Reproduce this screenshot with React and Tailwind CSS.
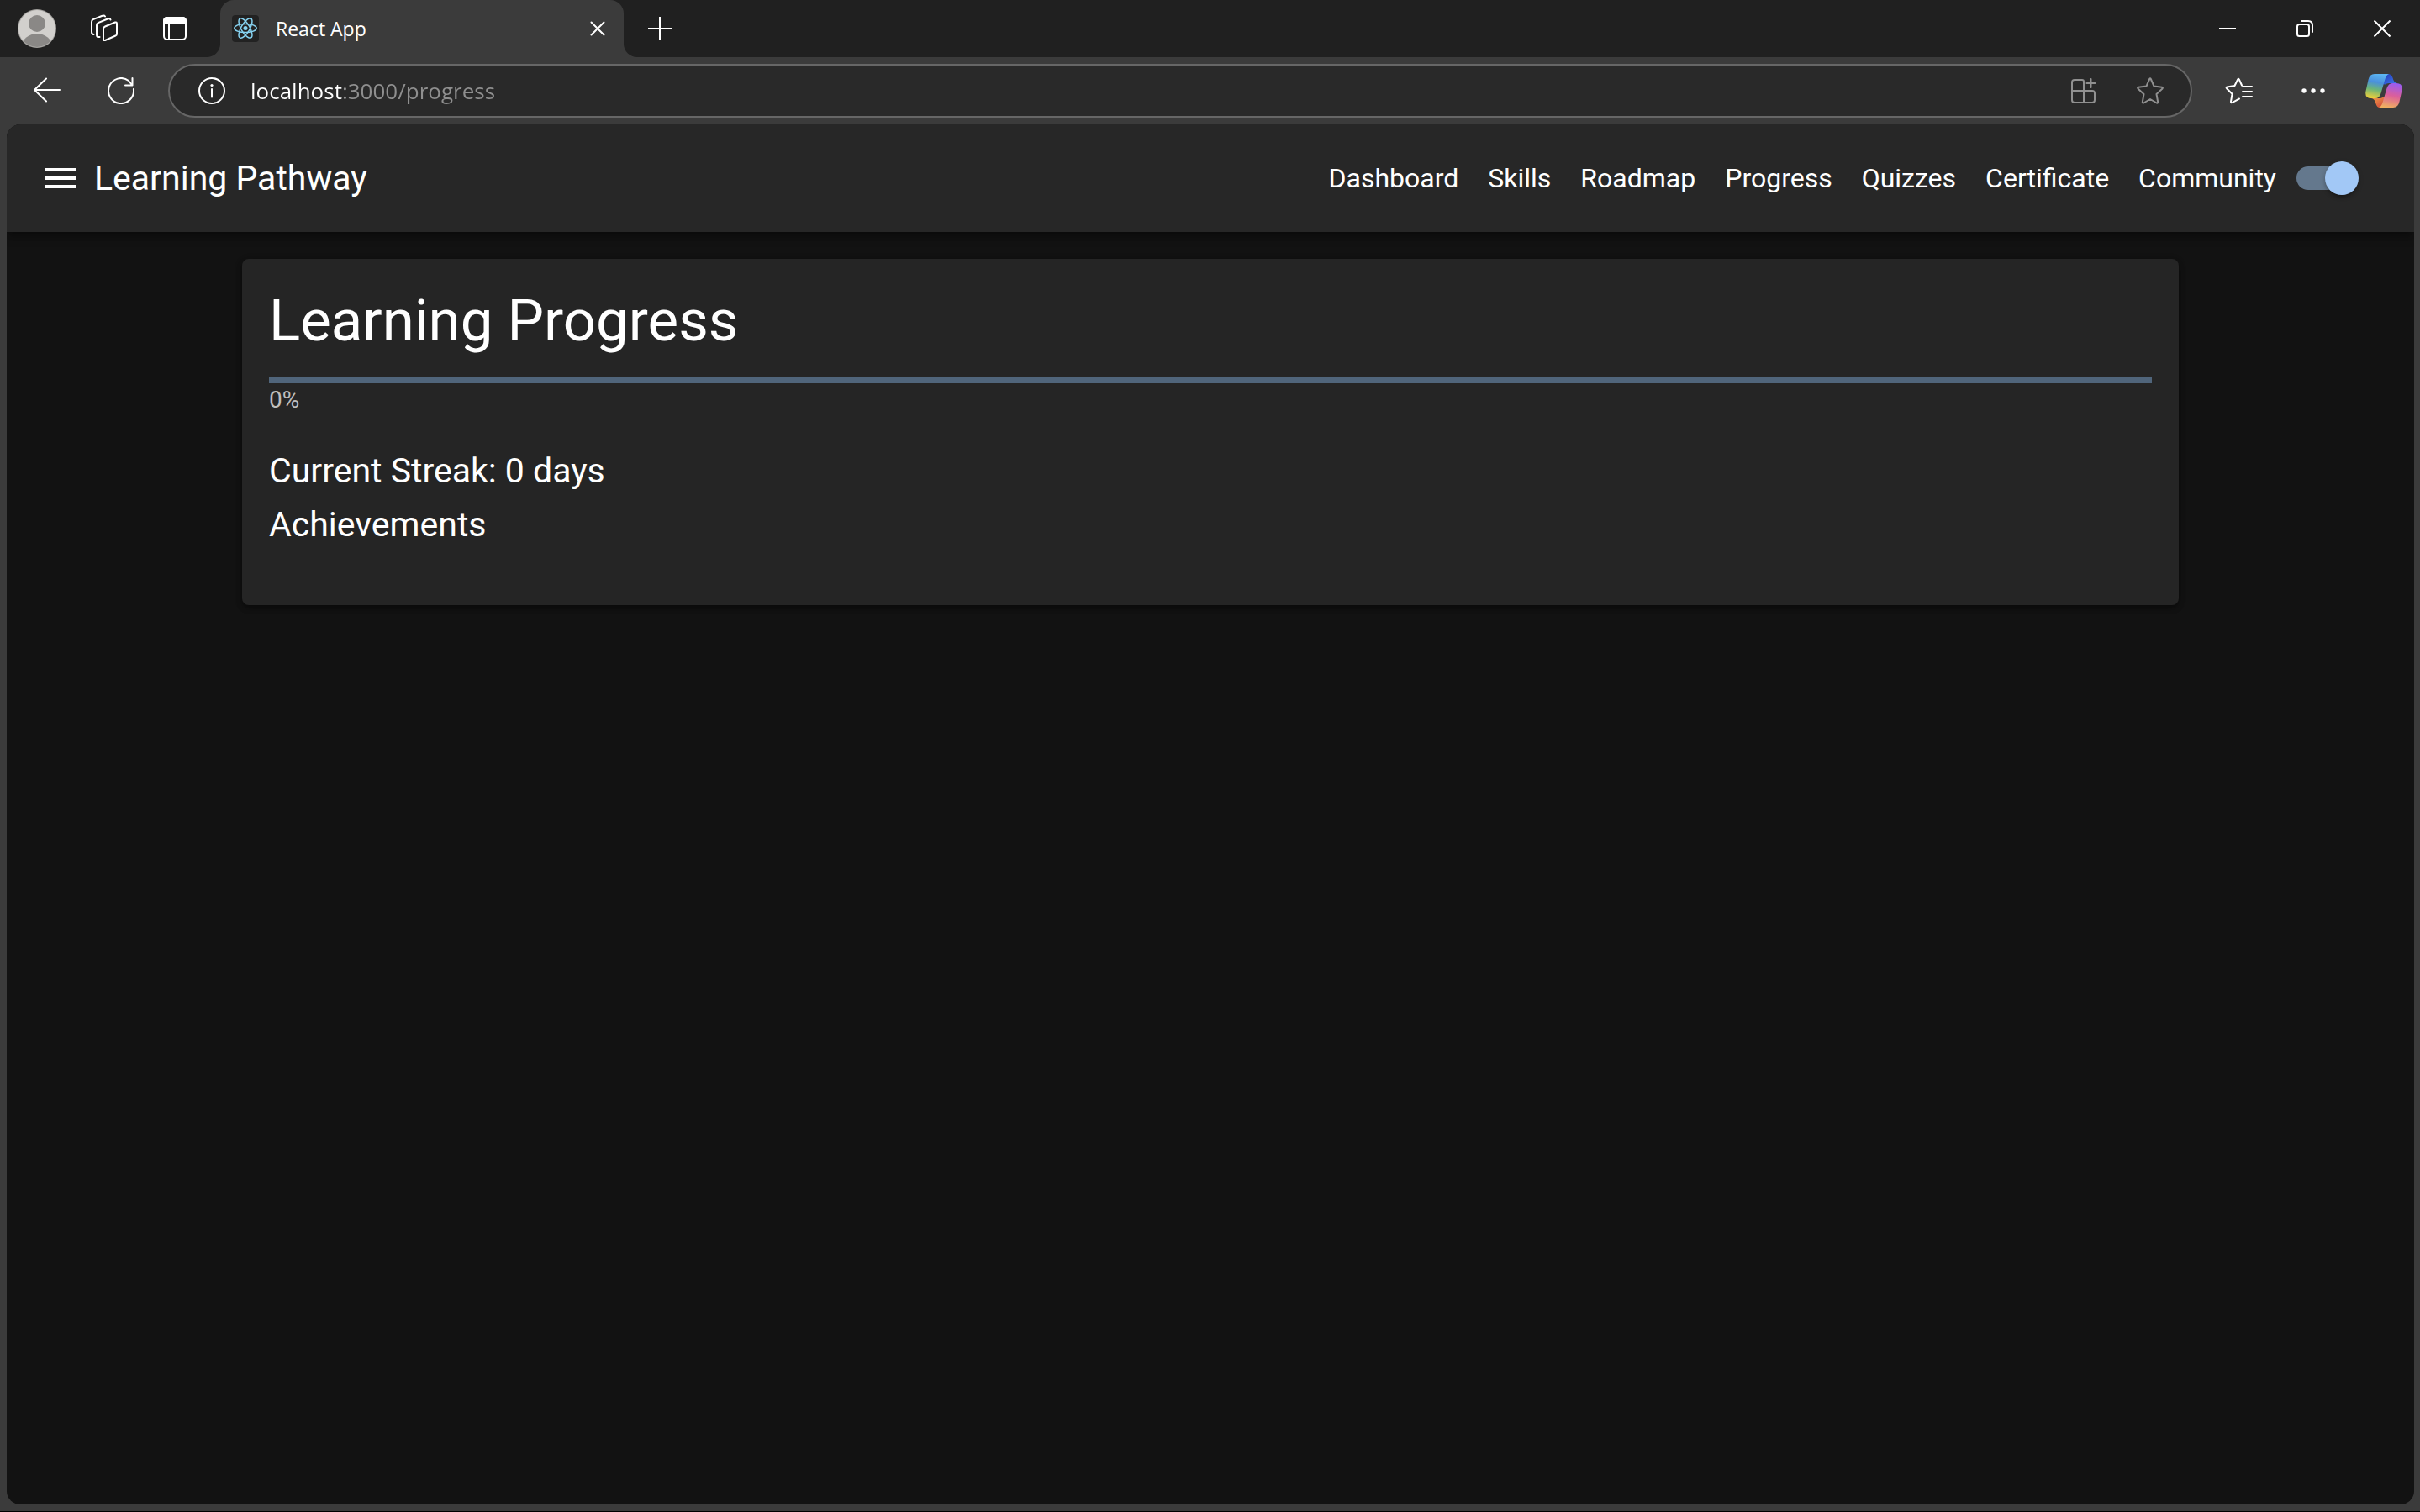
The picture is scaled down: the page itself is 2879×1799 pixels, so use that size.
const navItems = ["Dashboard", "Skills", "Roadmap", "Progress", "Quizzes", "Certificate", "Community"];

function IconButton({ label, className = "", children }) {
  return (
    <button type="button" aria-label={label} className={"flex shrink-0 items-center justify-center " + className}>
      {children}
    </button>
  );
}

function Svg({ w, h, className = "", children, strokeWidth = 2, ...rest }) {
  return (
    <svg
      width={w}
      height={h}
      viewBox={`0 0 ${w} ${h}`}
      fill="none"
      stroke="currentColor"
      strokeWidth={strokeWidth}
      strokeLinecap="round"
      strokeLinejoin="round"
      aria-hidden="true"
      className={"shrink-0 " + className}
      {...rest}
    >
      {children}
    </svg>
  );
}

function Avatar() {
  return (
    <Svg w={46} h={46} stroke="none">
      <defs>
        <clipPath id="avatar-clip">
          <circle cx="23" cy="23" r="22" />
        </clipPath>
      </defs>
      <circle cx="23" cy="23" r="23" fill="#a3a19e" />
      <circle cx="23" cy="23" r="22" fill="#d2d0cd" />
      <circle cx="23" cy="17" r="10" fill="#8a8886" />
      <ellipse cx="23" cy="44" rx="18" ry="15" fill="#8a8886" clipPath="url(#avatar-clip)" />
    </Svg>
  );
}

function WorkspacesIcon() {
  return (
    <Svg w={34} h={34}>
      <path d="M18 14.500 L30 9.500 Q32 9 32 11 V23.500 Q32 25 30.500 25.500 L18 31 Q16 31.500 16 29.500 V17 Q16 15.300 18 14.500Z" />
      <path d="M11.500 27 H11 Q8 27.500 8 24.500 V13 Q8 11 9.800 10.200 L21 5.500 Q24 4.500 24.500 6.500" />
      <path d="M4.500 24 Q2 24 2 21 V9 Q2 7 3.800 6.200 L14 2 Q17 1 18 2.500" />
    </Svg>
  );
}

function TabActionsIcon() {
  return (
    <Svg w={28} h={28}>
      <rect x="1" y="1" width="26" height="26" rx="4" />
      <path d="M1 7 V5 Q1 1 5 1 H23 Q27 1 27 5 V7Z" fill="currentColor" />
      <path d="M7 8 V27" strokeLinecap="butt" />
    </Svg>
  );
}

function ReactFavicon() {
  return (
    <Svg w={32} h={32} stroke="#86d2f0" strokeWidth={1.5}>
      <rect width="32" height="32" rx="4" fill="#222222" stroke="none" />
      <circle cx="16" cy="15.500" r="2.500" fill="#86d2f0" stroke="none" />
      <ellipse cx="16" cy="15.500" rx="13.200" ry="5.100" />
      <ellipse cx="16" cy="15.500" rx="13.200" ry="5.100" transform="rotate(60 16 15.500)" />
      <ellipse cx="16" cy="15.500" rx="13.200" ry="5.100" transform="rotate(120 16 15.500)" />
    </Svg>
  );
}

function CopilotIcon() {
  return (
    <Svg w={44} h={40} stroke="none">
      <defs>
        <linearGradient id="cp-a" x1="0.600" y1="0" x2="0.400" y2="1">
          <stop offset="0" stopColor="#5cb6f2" />
          <stop offset="0.350" stopColor="#4a90dc" />
          <stop offset="0.650" stopColor="#6cb578" />
          <stop offset="1" stopColor="#e8cf3c" />
        </linearGradient>
        <linearGradient id="cp-b" x1="0.600" y1="0" x2="0.400" y2="1">
          <stop offset="0" stopColor="#9a5cf0" />
          <stop offset="0.500" stopColor="#dc5f9a" />
          <stop offset="1" stopColor="#f0b060" />
        </linearGradient>
        <linearGradient id="cp-c" x1="0" y1="0" x2="1" y2="1">
          <stop offset="0" stopColor="#2336b4" />
          <stop offset="1" stopColor="#3f7df0" />
        </linearGradient>
        <linearGradient id="cp-d" x1="0" y1="0" x2="1" y2="1">
          <stop offset="0" stopColor="#f0a048" />
          <stop offset="1" stopColor="#cf3c38" />
        </linearGradient>
      </defs>
      <path d="M22 0 H27 Q31 0 32.500 4.500 Q34 11 38 11 H28 Q25 11 23.500 12.500 L20 12Z" fill="url(#cp-c)" />
      <path d="M22 40 H17 Q14 40 12.500 35.500 Q11 29 7 29 H17 Q19 29 20.500 28 L25 28Z" fill="url(#cp-d)" />
      <path d="M11 0 H28 Q25 1 23.500 6 L18.500 23 Q16.500 29 12 29 H7 Q-1 29 .500 20.500 L3.500 7 Q5 0 11 0Z" fill="url(#cp-a)" />
      <path d="M33 40 H16 Q19 39 20.500 34 L25.500 17 Q27.500 11 32 11 H37 Q45 11 43.500 19.500 L40.500 33 Q39 40 33 40Z" fill="url(#cp-b)" />
    </Svg>
  );
}

function TabStrip() {
  return (
    <div className="flex h-[68px] items-stretch bg-[#3b3b3b] text-white">
      <div className="flex items-center rounded-br-2xl bg-[#202020] pl-[21px] pr-10">
        <IconButton label="Profile"><Avatar /></IconButton>
        <IconButton label="Workspaces" className="ml-10"><WorkspacesIcon /></IconButton>
        <IconButton label="Tab actions menu" className="ml-[53px]"><TabActionsIcon /></IconButton>
      </div>
      <div className="flex bg-[#202020]">
        <div className="flex w-[480px] items-center rounded-t-2xl bg-[#3b3b3b] pl-3.5 pr-[22px]">
          <ReactFavicon />
          <span className="ml-5 flex-1 text-[23px] leading-8">React App</span>
          <IconButton label="Close tab">
            <Svg w={18} h={18}><path d="M1.500 1.500 L16.500 16.500 M16.500 1.500 L1.500 16.500" /></Svg>
          </IconButton>
        </div>
      </div>
      <div className="flex flex-1 items-center justify-between rounded-bl-2xl bg-[#202020] pl-[29px] pr-[35px]">
        <IconButton label="New tab">
          <Svg w={28} h={28} strokeLinecap="butt"><path d="M14 0 V28 M0 14 H28" /></Svg>
        </IconButton>
        <div className="flex items-center gap-[72px]">
          <IconButton label="Minimize">
            <Svg w={20} h={20} strokeLinecap="butt"><path d="M0 10 H20" /></Svg>
          </IconButton>
          <IconButton label="Restore">
            <Svg w={20} h={20}>
              <rect x="1" y="5" width="14" height="14" rx="2.500" />
              <path d="M6 1 H14 Q19 1 19 6 V14" />
            </Svg>
          </IconButton>
          <IconButton label="Close window">
            <Svg w={20} h={20} strokeLinecap="butt"><path d="M0.500 0.500 L19.500 19.500 M19.500 0.500 L0.500 19.500" /></Svg>
          </IconButton>
        </div>
      </div>
    </div>
  );
}

function AddressBar() {
  return (
    <div className="flex h-20 items-center pl-10 pr-[21px] text-white">
      <IconButton label="Back">
        <Svg w={32} h={32}><path d="M31 15 H1 M15 1.500 L1 15 L15 28.500" /></Svg>
      </IconButton>
      <IconButton label="Refresh" className="ml-14">
        <Svg w={32} h={32}>
          <path d="M30.900 14 A15 15 0 1 1 25 4 L29 9 M29.500 1 V9.500 H21" />
        </Svg>
      </IconButton>
      <div className="ml-10 flex h-16 flex-1 items-center rounded-full border-2 border-[#666666] bg-[#292929] pl-[34px] pr-8">
        <IconButton label="View site information">
          <Svg w={32} h={32}>
            <circle cx="16" cy="16" r="15" />
            <path d="M16 14 V23.500" />
            <circle cx="16" cy="9.500" r="1.600" fill="currentColor" stroke="none" />
          </Svg>
        </IconButton>
        <input
          aria-label="Address"
          type="text"
          defaultValue="localhost:3000/progress"
          className="ml-[30px] h-10 min-w-0 flex-1 bg-[linear-gradient(to_right,#ffffff_110px,#8f8f8f_110px)] bg-clip-text text-[26px] leading-10 text-transparent outline-none"
        />
        <IconButton label="App available" className="text-[#909090]">
          <Svg w={30} h={30}>
            <path d="M15 15 V4 Q15 2 13 2 H4 Q1 2 1 5 V26 Q1 29 4 29 H25 Q28 29 28 26 V18 Q28 15 25 15 H1 M15 15 V29" />
            <path d="M23.500 1 V11 M18.500 6 H28.500" />
          </Svg>
        </IconButton>
        <IconButton label="Add to favorites" className="ml-12 text-[#909090]">
          <Svg w={32} h={32}>
            <path d="M15.200 2 Q16 .500 16.800 2 L20.500 10.500 L30 11.800 Q31.500 12.200 30.500 13.500 L23.500 20 L25.200 29.500 Q25.200 31 23.800 30.500 L16 26 L8.200 30.500 Q6.800 31 6.800 29.500 L8.500 20 L1.500 13.500 Q.500 12.200 2 11.800 L11.500 10.500Z" />
          </Svg>
        </IconButton>
      </div>
      <IconButton label="Favorites" className="ml-[39px]">
        <Svg w={34} h={32}>
          <path d="M20 9.500 L16.800 2.500 Q16 1.200 15.200 2.500 L11.500 10 L2.500 11.500 Q1 12 2 13.200 L8.500 19.800 L7 29 Q7 31 8.800 30 L17 25.500" />
          <path d="M21 11 H32 M21 17 H32 M21 23 H32" />
        </Svg>
      </IconButton>
      <IconButton label="Settings and more" className="ml-[57px]">
        <Svg w={28} h={8} stroke="none" fill="currentColor">
          <circle cx="3" cy="4" r="2.700" />
          <circle cx="14" cy="4" r="2.700" />
          <circle cx="25" cy="4" r="2.700" />
        </Svg>
      </IconButton>
      <IconButton label="Copilot" className="ml-12"><CopilotIcon /></IconButton>
    </div>
  );
}

function ThemeSwitch() {
  return (
    <label className="flex h-[76px] w-[116px] cursor-pointer items-center px-6">
      <input type="checkbox" role="switch" aria-label="Dark mode" defaultChecked className="peer sr-only" />
      <span className="flex h-7 w-[68px] items-center rounded-full bg-[#64788d] pl-[34px]">
        <span className="size-10 shrink-0 rounded-full bg-[#a2c8f6] shadow-[0_4px_4px_-2px_rgba(0,0,0,0.300),0_2px_6px_rgba(0,0,0,0.200)]" />
      </span>
    </label>
  );
}

function AppHeader() {
  return (
    <header className="flex h-32 items-center bg-[#272727] pl-10 pr-12 shadow-[0_4px_8px_-2px_rgba(0,0,0,0.300),0_8px_10px_rgba(0,0,0,0.200)]">
      <IconButton label="Open menu">
        <svg width="48" height="48" viewBox="0 0 24 24" fill="currentColor" aria-hidden="true">
          <path d="M3 18h18v-2H3zm0-5h18v-2H3zm0-7v2h18V6z" />
        </svg>
      </IconButton>
      <span className="ml-4 flex-1 text-[41px] leading-[64px]">Learning Pathway</span>
      <nav className="flex items-center gap-[35px] text-[32px] leading-[48px]">
        {navItems.map((item) => (
          <a key={item} href={"/" + item.toLowerCase()}>{item}</a>
        ))}
      </nav>
      <ThemeSwitch />
    </header>
  );
}

function ProgressCard() {
  return (
    <section className="mx-auto mt-8 w-full max-w-[2304px] rounded-lg bg-[#252525] p-8 shadow-[0_4px_6px_rgba(0,0,0,0.300),0_2px_10px_rgba(0,0,0,0.200)]">
      <h1 className="text-[69px] leading-[84px]">Learning Progress</h1>
      <div role="progressbar" aria-label="Learning progress" aria-valuenow={0} aria-valuemin={0} aria-valuemax={100} className="mt-6 h-2 bg-[#50657b]" />
      <p className="text-[28px] leading-10 text-[#bebebe]">0%</p>
      <h2 className="mt-8 text-[41px] leading-[64px]">Current Streak: 0 days</h2>
      <h2 className="mb-8 text-[41px] leading-[64px]">Achievements</h2>
    </section>
  );
}

export default function App() {
  return (
    <div className="flex min-h-screen flex-col border-b border-black bg-[#3b3b3b] font-['Open_Sans',sans-serif]">
      <TabStrip />
      <AddressBar />
      <div className="mb-2 ml-2 mr-[7px] flex-1 overflow-hidden rounded-2xl bg-[#121212] font-[Roboto,sans-serif] text-white">
        <AppHeader />
        <main>
          <ProgressCard />
        </main>
      </div>
    </div>
  );
}
